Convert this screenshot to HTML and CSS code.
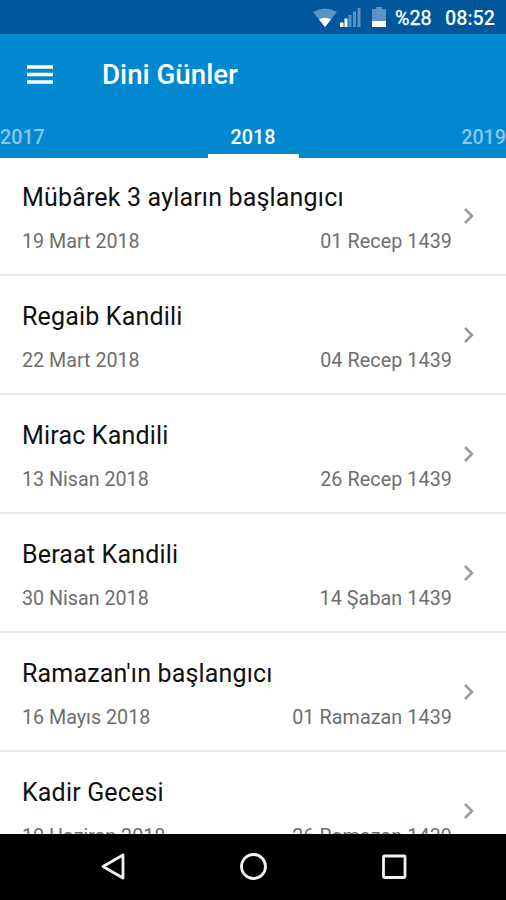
FILE: index.html
```html
<!DOCTYPE html>
<html lang="tr">
<head>
<meta charset="utf-8">
<title>Dini Günler</title>
<link rel="stylesheet" href="styles.css">
</head>
<body>
<div class="screen">
  <div class="status">
    <svg class="status-icons" width="76" height="34" viewBox="0 0 76 34">
      <path d="M0 12Q12 5 24 12L12 27Z" fill="#5c93c5"/>
      <path d="M6 19.500Q12 16 18 19.500L12 27Z" fill="#fff"/>
      <path d="M27 22.500h3.500v4.500h-3.500zM31.500 18.500h3v8.500h-3z" fill="#fff"/>
      <path d="M35.500 15h3v12h-3zM40 11.500h3v15.500h-3zM44.500 8h3v19h-3z" fill="#5c93c5"/>
      <path d="M59 9h4V7h6v2h4v12H59z" fill="#5c93c5"/>
      <path d="M59 21h14v6H59z" fill="#fff"/>
    </svg>
    <span class="battery">%28</span>
    <span class="clock">08:52</span>
  </div>
  <header class="bar">
    <svg class="menu" width="26" height="20" viewBox="0 0 26 20"><path d="M0 2h26M0 9.500h26M0 17h26" stroke="#fff" stroke-width="3.500"/></svg>
    <h1 class="heading">Dini Günler</h1>
  </header>
  <nav class="tabs">
    <span class="tab">2017</span>
    <span class="tab active">2018</span>
    <span class="tab last">2019</span>
  </nav>
  <main class="list">
    <article class="row"><div class="info"><h2 class="name">Mübârek 3 ayların başlangıcı</h2><div class="dates"><span>19 Mart 2018</span><span class="hijri">01 Recep 1439</span></div></div><svg class="chevron" width="12" height="18" viewBox="0 0 12 18"><path d="M2 2l7 7-7 7"/></svg></article>
    <article class="row"><div class="info"><h2 class="name">Regaib Kandili</h2><div class="dates"><span>22 Mart 2018</span><span class="hijri">04 Recep 1439</span></div></div><svg class="chevron" width="12" height="18" viewBox="0 0 12 18"><path d="M2 2l7 7-7 7"/></svg></article>
    <article class="row"><div class="info"><h2 class="name">Mirac Kandili</h2><div class="dates"><span>13 Nisan 2018</span><span class="hijri">26 Recep 1439</span></div></div><svg class="chevron" width="12" height="18" viewBox="0 0 12 18"><path d="M2 2l7 7-7 7"/></svg></article>
    <article class="row"><div class="info"><h2 class="name">Beraat Kandili</h2><div class="dates"><span>30 Nisan 2018</span><span class="hijri">14 Şaban 1439</span></div></div><svg class="chevron" width="12" height="18" viewBox="0 0 12 18"><path d="M2 2l7 7-7 7"/></svg></article>
    <article class="row"><div class="info"><h2 class="name">Ramazan'ın başlangıcı</h2><div class="dates"><span>16 Mayıs 2018</span><span class="hijri">01 Ramazan 1439</span></div></div><svg class="chevron" width="12" height="18" viewBox="0 0 12 18"><path d="M2 2l7 7-7 7"/></svg></article>
    <article class="row"><div class="info"><h2 class="name">Kadir Gecesi</h2><div class="dates"><span>10 Haziran 2018</span><span class="hijri">26 Ramazan 1439</span></div></div><svg class="chevron" width="12" height="18" viewBox="0 0 12 18"><path d="M2 2l7 7-7 7"/></svg></article>
  </main>
  <footer class="nav">
    <svg width="28" height="30" viewBox="0 0 28 30"><path d="M4 14.500L24 3v23z"/></svg>
    <svg width="28" height="30" viewBox="0 0 28 30"><circle cx="13.500" cy="14.500" r="12"/></svg>
    <svg width="28" height="30" viewBox="0 0 28 30"><rect x="3.500" y="4" width="21.500" height="21.500" rx="1"/></svg>
  </footer>
</div>
</body>
</html>
```

FILE: styles.css
```css
* { box-sizing: border-box; }
body { margin: 0; font-family: Roboto, "Liberation Sans", sans-serif; }
.screen { width: 506px; height: 900px; display: flex; flex-direction: column; overflow: hidden; background: #fff; }
.status { height: 34px; flex: none; display: flex; align-items: center; justify-content: flex-end; padding: 2px 11px 0 0; background: #01579b; color: #fff; font-size: 19.700px; font-weight: 500; }
.status-icons { margin: -2px 6px 0 0; }
.battery { font-weight: 400; width: 38px; margin-right: 12px; -webkit-text-stroke: .3px; }
.clock { width: 50px; }
.bar { height: 82px; flex: none; display: flex; align-items: center; padding: 0 27px; background: #0288d1; color: #fff; }
.heading { margin: 0 0 0 49px; font-size: 27.700px; font-weight: 500; line-height: 34px; }
.tabs { height: 41.500px; flex: none; display: grid; grid-template-columns: 1fr 91px 1fr; background: #0288d1; }
.tab { height: 41.500px; line-height: 43px; font-size: 19.700px; font-weight: 500; color: #86c7ea; }
.active { color: #fff; text-align: center; border-bottom: 4px solid #fff; }
.last { text-align: right; }
.list { flex: 1; min-height: 0; overflow: hidden; }
.row { height: 118.900px; display: flex; align-items: center; padding: 1px 31px 0 22px; border-bottom: 2px solid #e8e8e8; }
.info { flex: none; width: 430px; padding-top: 4px; }
.name { margin: 0; font-size: 25px; line-height: 32px; font-weight: 400; letter-spacing: .17px; color: #111; }
.dates { display: flex; justify-content: space-between; margin-top: 16px; font-size: 19.700px; line-height: 24px; color: #6e6e6e; }
.hijri { letter-spacing: .1px; }
.chevron { margin-left: 11px; flex: none; fill: none; stroke: #999; stroke-width: 2.500; }
.nav { height: 66.500px; flex: none; display: flex; align-items: center; justify-content: space-between; padding: 0 98px 0 99px; background: #000; }
.nav svg { fill: none; stroke: #f2f2f2; stroke-width: 2.800; stroke-linejoin: round; }
```
